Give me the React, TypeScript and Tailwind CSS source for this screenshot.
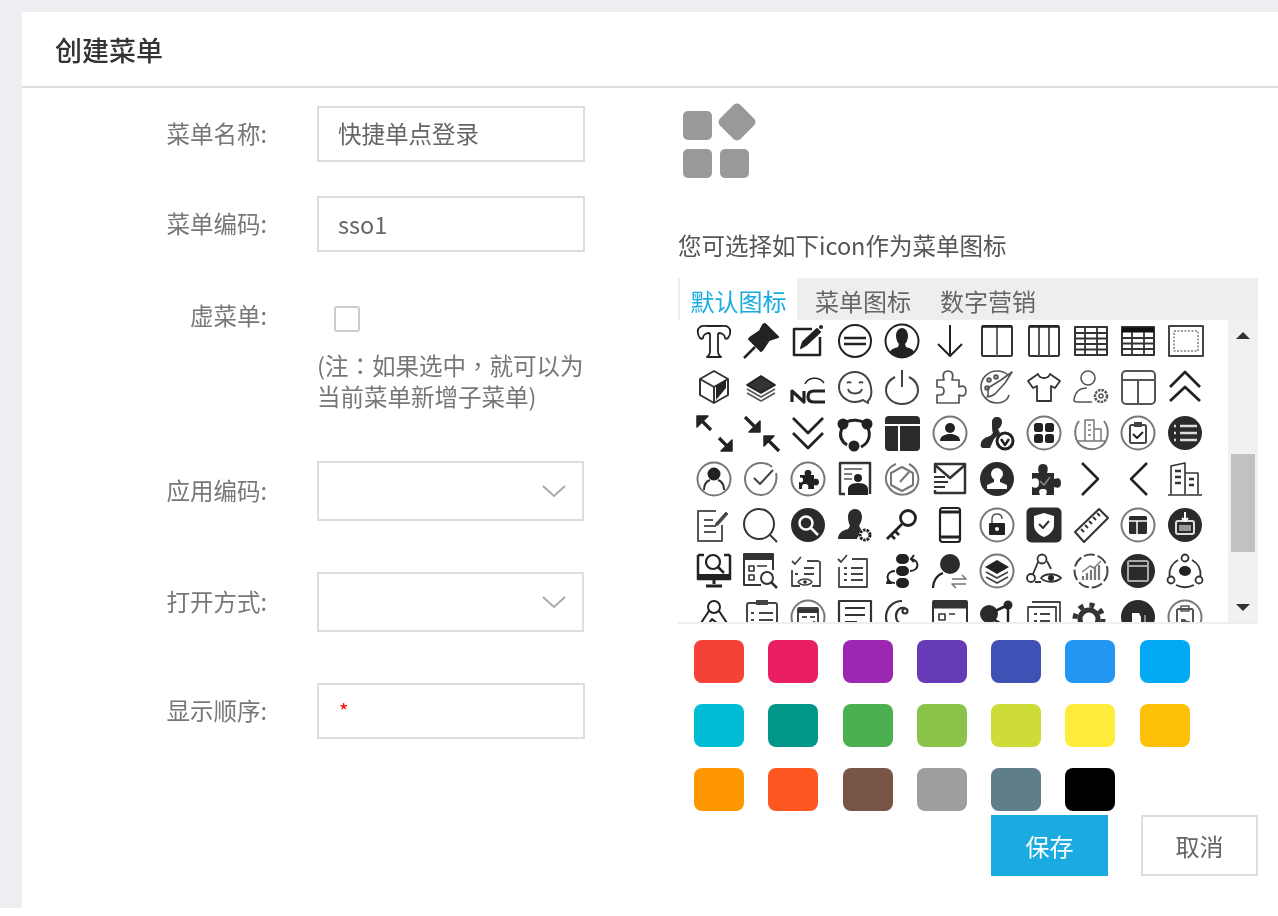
import { ReactNode } from 'react'

const FONT = { fontFamily: '"Noto Sans CJK SC", "Liberation Sans", sans-serif' }

const colors = [
  '#F44336', '#E91E63', '#9C27B0', '#673AB7', '#3F51B5', '#2196F3', '#03A9F4',
  '#00BCD4', '#009688', '#4CAF50', '#8BC34A', '#CDDC39', '#FFEB3B', '#FFC107',
  '#FF9800', '#FF5722', '#795548', '#9E9E9E', '#607D8B', '#000000',
]

// shared bits of the icon set, all in a 36x36 box
const ring = <circle cx="18" cy="18" r="16.5" stroke="#777" />
const disc = <circle cx="18" cy="18" r="17" fill="#2b2b2b" stroke="none" />

const icons: ReactNode[] = [
  // row 1
  <path d="M4 15C1 11 1 6 4 4c2-2 5-1 8-1h12c3 0 6-1 8 1 3 2 3 7 0 11-1 1-3 1-3 0 0-3-3-5-6-5l-1 1v18c0 3 2 4 3 5H11c1-1 3-2 3-5V11l-1-1c-3 0-6 2-6 5 0 1-2 1-3 0z" strokeWidth="1.8" />,
  <g><path d="M22 1l13 13-3 1-6 2-6 9-2 2-12-12 2-2 9-6 3-6z" fill="#222" /><path d="M12 24L1 35" strokeWidth="2.5" /></g>,
  <g><path d="M30 14v18H4V6h18" strokeWidth="2.5" /><path d="M11 25l2-6L27 6l3 3-14 13z" fill="#222" /><circle cx="31" cy="4" r="2" fill="#222" stroke="none" /></g>,
  <g><circle cx="18" cy="18" r="16" /><path d="M7 15h22M7 21h22" strokeWidth="2.5" /></g>,
  <g><circle cx="18" cy="18" r="16.5" /><path d="M12 13c0-5 3-8 6-8s6 3 6 8c0 4-2 7-3 8l1 3c3 1 7 2 8 5-3 4-7 6-12 6s-9-2-12-6c1-3 5-4 8-5l1-3c-1-1-3-4-3-8z" fill="#222" stroke="none" /></g>,
  <path d="M18 2v31M6 21l12 12 12-12" />,
  <g><rect x="3" y="3" width="30" height="30" rx="1.5" stroke="#333" /><path d="M18 3v30" stroke="#666" /><path d="M3 3.5h30" strokeWidth="2.5" /></g>,
  <g><rect x="3" y="3" width="30" height="30" rx="1.5" stroke="#333" /><path d="M13 3v30M23 3v30" stroke="#555" /><path d="M3 3.5h30" strokeWidth="2.5" /></g>,
  <g stroke="#333"><rect x="2" y="4" width="32" height="28" strokeWidth="2" /><path d="M2 10h32M2 15.5h32M2 21h32M2 26.5h32M12 4v28M24 4v28" strokeWidth="1.8" /></g>,
  <g stroke="#333"><rect x="2" y="4" width="32" height="28" strokeWidth="2" /><path d="M2 7h32" strokeWidth="5" stroke="#111" /><path d="M2 15h32M2 20.5h32M2 26h32M12 9v23M24 9v23" strokeWidth="1.8" /></g>,
  <g stroke="#444"><rect x="2" y="3" width="34" height="30" strokeWidth="2" /><rect x="7" y="8" width="24" height="20" strokeWidth="1" strokeDasharray="2 1.5" /></g>,
  // row 2
  <g stroke="#333"><path d="M18 2l14 8v16l-14 8-14-8V10z" /><path d="M4 10l14 8 14-8M18 18v16" /><path d="M20 17l10-6v8l-10 12z" fill="#222" stroke="none" /></g>,
  <g strokeWidth="1.6"><path d="M18 7l14 9-14 8-14-8z" fill="#333" /><path d="M4 20l14 8 14-8M4 24l14 8 14-8" stroke="#555" /></g>,
  <g strokeWidth="3.2"><path d="M2 33V22l12 11V22" /><path d="M35 22H24c-4 0-6 2-6 5.500s2 5.500 6 5.500h11" /><path d="M15 15c3-7 14-8 19-1" strokeWidth="1.5" /></g>,
  <g stroke="#444"><path d="M31 32c3-3 4-8 3-13C33 9 26 3 18 3 9 3 2 10 2 18s7 15 16 15c3 0 6-1 8-2l5 3z" /><path d="M10 14c1-1 3-1 4 0M22 14c1-1 3-1 4 0M11 20c2 6 12 6 14 0" /></g>,
  <g stroke="#444"><path d="M11 8C5 11 2 16 2 21c0 8 7 14 16 14s16-6 16-14c0-5-3-10-9-13" /><path d="M18 1v17" /></g>,
  <path d="M5 11h7c-2-6 0-9 4-9s6 3 4 9h7v7c5-2 7 0 7 4s-2 6-7 4v8H5v-8h3c3 0 4-2 4-4s-1-4-4-4H5z" stroke="#555" strokeWidth="1.7" />,
  <g stroke="#555"><path d="M30 26c-1 5-6 8-12 8C9 34 2 27 2 18S9 2 18 2c4 0 8 1 11 4" strokeWidth="1.6" /><path d="M9 19l13-8 11-8-7 11-10 11c-3 2-5 3-8 3 2-2 1-6 1-9z" strokeWidth="1.6" /><circle cx="10" cy="11" r="1.8" /><circle cx="17" cy="8" r="1.8" /><circle cx="8" cy="19" r="1.8" /></g>,
  <path d="M12 5l-10 7 5 7 4-2v15h14V17l4 2 5-7-10-7c-1 3-3 4-6 4s-5-1-6-4z" stroke="#333" strokeWidth="1.8" />,
  <g stroke="#555"><circle cx="15" cy="9" r="7" strokeWidth="1.6" /><path d="M14 19c-7 0-12 4-13 12 0 2 2 2 3 2h15" strokeWidth="1.6" /><circle cx="28" cy="27" r="6" strokeWidth="2.5" strokeDasharray="2.5 1" /><circle cx="28" cy="27" r="2" strokeWidth="1.5" /></g>,
  <g stroke="#555"><rect x="2" y="2" width="33" height="33" rx="4" /><path d="M2 11h33M18 11v24" /></g>,
  <path d="M3 18L18 3l15 15M3 32l15-14 15 14" strokeWidth="2.8" />,
  // row 3
  <g strokeWidth="3.2"><path d="M4 4l11 11M23 23l11 11" /><path d="M1 12V1h11zM36 25v11H25z" fill="#222" strokeWidth="1.5" /></g>,
  <g strokeWidth="3.2"><path d="M2 2l11 11M25 25l11 11" /><path d="M17 6v11H6zM21 31V21h10z" fill="#222" strokeWidth="1.5" /></g>,
  <path d="M3 3l15 15L33 3M3 18l15 15 15-15" strokeWidth="2.8" />,
  <g strokeWidth="3"><path d="M9 7c6-3 14-2 19 1M5 13c-3 7-1 13 5 17M31 13c3 7 1 15-7 19" /><circle cx="6" cy="9" r="4" fill="#222" /><circle cx="30" cy="9" r="4" fill="#222" /><circle cx="17" cy="31" r="4" fill="#222" /></g>,
  <g><rect x="1" y="1" width="35" height="35" rx="4" fill="#2b2b2b" stroke="none" /><path d="M1 10h35M15 10v26" stroke="#fff" strokeWidth="2" /></g>,
  <g>{ring}<circle cx="18" cy="13" r="5" fill="#222" stroke="none" /><path d="M8 26c0-5 5-7 10-7s10 2 10 7z" fill="#222" stroke="none" /></g>,
  <g><path d="M13 7c0-3 2-5 5-5s5 2 5 5-2 6-4 7l2 4-6 6-4 9H5c-3 0-4-2-3-5 1-4 5-6 9-7l3-3c-1-2-1-7-1-11z" fill="#2b2b2b" stroke="none" /><circle cx="26" cy="26" r="8" fill="#fff" strokeWidth="3" /><path d="M22 24l4 6 4-6" strokeWidth="2.5" /></g>,
  <g>{ring}<rect x="8" y="8" width="9" height="9" rx="2.5" fill="#222" stroke="none" /><rect x="19" y="8" width="9" height="9" rx="2.5" fill="#222" stroke="none" /><rect x="8" y="19" width="9" height="9" rx="2.5" fill="#222" stroke="none" /><rect x="19" y="19" width="9" height="9" rx="2.5" fill="#222" stroke="none" /></g>,
  <g stroke="#777" strokeWidth="1.5"><path d="M6 6C0 14 1 27 10 32c6 3 12 3 17 0 9-5 10-18 4-26" strokeWidth="2" /><path d="M12 26V5h9v21M21 14h7v12M5 26h27" /><path d="M15 10h3M15 15h3M15 20h3" /></g>,
  <g>{ring}<rect x="10" y="10" width="16" height="18" rx="1.5" stroke="#444" /><rect x="14" y="7" width="8" height="5" fill="#444" stroke="none" /><path d="M13 19l4 4 6-6" stroke="#222" /></g>,
  <g>{disc}<path d="M7 11h2M13 11h17M7 18h2M13 18h17M7 25h2M13 25h17" stroke="#ddd" strokeWidth="2.5" /></g>,
  // row 4
  <g>{ring}<circle cx="18" cy="13" r="5.5" fill="#222" stroke="#222" /><path d="M8 29c0-6 3-9 6-10M28 29c0-6-3-9-6-10" stroke="#333" /></g>,
  <g><path d="M33 12c2 9-3 22-15 22C9 34 2 27 2 18S9 2 18 2c4 0 8 1 11 4" stroke="#777" /><path d="M11 17l6 6L30 9" stroke="#444" /></g>,
  <g>{ring}<path d="M10 14h5c-1-3 0-5 3-5s4 2 3 5h3v4c3-1 5 0 5 3s-2 4-5 3v4h-6c1-3 0-5-3-5s-3 2-3 5H9v-7c3 1 4 0 4-2s-1-3-3-2z" fill="#222" stroke="none" /></g>,
  <g><path d="M8 33H3V2h30v31" strokeWidth="2.5" stroke="#333" /><path d="M7 8h18M7 13h8M7 18h8" strokeWidth="1.5" stroke="#555" /><circle cx="21" cy="17" r="4" fill="#222" stroke="none" /><path d="M11 34v-6c0-3 3-6 10-6s10 3 10 6v6z" fill="#222" stroke="none" /></g>,
  <g stroke="#777"><path d="M12 3C1 7-1 20 6 28c7 8 19 7 25 0 6-8 4-20-6-25" /><path d="M18 6l11 6v12l-11 6-11-6V12z" /><path d="M16 21l9-10" /></g>,
  <g strokeWidth="2.5" stroke="#333"><path d="M3 12V3h30v29H3v-3" /><path d="M3 4l15 13L33 4" /><path d="M2 16h11M2 21h14M2 26h11" strokeWidth="2" /></g>,
  <g>{disc}<circle cx="18" cy="13" r="6" fill="#fff" stroke="none" /><path d="M15 18h6v3l7 3v4H8v-4l7-3z" fill="#fff" stroke="none" /></g>,
  <g><path d="M6 12h7c-2-6 0-9 4-9s6 3 4 9h7v6c5-2 7 0 7 4s-2 6-7 4v8h-8c2-5 0-6-3-6s-5 1-3 6H6v-8c5 2 7 0 7-4s-2-6-7-4z" fill="#2b2b2b" stroke="none" /><path d="M14 20l4 4 6-8" stroke="#888" strokeWidth="1.5" /></g>,
  <path d="M9 2l16 16L9 34" strokeWidth="2.5" />,
  <path d="M27 2L11 18l16 16" strokeWidth="2.5" />,
  <g strokeWidth="1.6" stroke="#333"><path d="M4 33V5l14-3v31M18 12h13v21M1 34h34" /><path d="M8 10h6M8 16h6M8 22h6M22 18h5M22 24h5" strokeWidth="2.5" /></g>,
  // row 5
  <g stroke="#555"><path d="M26 18v16H2V4h18" strokeWidth="2" /><path d="M8 13h9M8 19h12M8 25h12" strokeWidth="2" /><path d="M20 16l-1 3 3-1L32 7l-2-2z" fill="#444" strokeWidth="1" /></g>,
  <g stroke="#333"><circle cx="16" cy="17" r="15" /><path d="M27 28l7 7" /></g>,
  <g>{disc}<circle cx="16" cy="16" r="6.5" stroke="#fff" strokeWidth="2.5" /><path d="M21 21l7 7" stroke="#fff" strokeWidth="2.5" /></g>,
  <g><path d="M11 10c0-5 3-8 7-8s7 3 7 8c0 4-2 7-3 9l2 3-4 10H1c0-6 5-9 10-10l2-3c-1-2-2-6-2-9z" fill="#2b2b2b" stroke="none" /><circle cx="28" cy="28" r="5" strokeWidth="3" strokeDasharray="2.5 1" fill="#fff" /></g>,
  <g strokeWidth="2.8"><circle cx="24" cy="11" r="7.5" /><path d="M18 17L3 32M7 28l4 4M11 24l4 4" /></g>,
  <g><rect x="8" y="1" width="20" height="34" rx="2.5" strokeWidth="2.2" /><path d="M8 5h20M8 30h20" strokeWidth="3" /></g>,
  <g>{ring}<path d="M13 16v-4c0-3 2-5 5-5s5 2 5 5" stroke="#555" strokeWidth="1.5" /><rect x="10" y="16" width="16" height="12" rx="1" fill="#222" stroke="none" /><circle cx="18" cy="22" r="2" fill="#fff" stroke="none" /></g>,
  <g><rect x="0.5" y="0.5" width="35" height="35" rx="5" fill="#2b2b2b" stroke="none" /><path d="M18 6l10 3v9c0 6-5 10-10 12-5-2-10-6-10-12V9z" fill="#fff" stroke="none" /><path d="M13 17l4 4 6-7" stroke="#333" strokeWidth="2" /></g>,
  <g strokeWidth="2" stroke="#333"><path d="M2 25L26 2l9 9-24 24z" /><path d="M8 22l3 3M12 18l3 3M16 14l3 3M20 10l3 3M24 6l3 3" strokeWidth="1.8" /></g>,
  <g>{ring}<rect x="9" y="9" width="18" height="18" rx="1.5" fill="#2b2b2b" stroke="none" /><path d="M9 14h18M17 14v13" stroke="#fff" strokeWidth="1.5" /></g>,
  <g>{disc}<rect x="9" y="14" width="18" height="13" rx="2" stroke="#ddd" /><rect x="12" y="18" width="12" height="6" fill="#999" stroke="none" /><path d="M18 5v9M15 11l3 3 3-3" stroke="#fff" /></g>,
  // row 6
  <g><path d="M2 2v24h32V2" strokeWidth="2.5" /><path d="M2 2h6M34 2h-6" strokeWidth="2.5" /><path d="M2 23h32" strokeWidth="4" /><circle cx="17" cy="9" r="7" strokeWidth="2.2" /><path d="M22 14l6 6" strokeWidth="2.5" /><path d="M18 26v5M10 33h16" strokeWidth="3" /></g>,
  <g strokeWidth="2" stroke="#333"><path d="M18 32H1V1h29v16" /><path d="M1 4h29" strokeWidth="6" /><path d="M6 13h5v5H6zM6 22h5v5H6zM14 13h10" strokeWidth="1.6" /><circle cx="24" cy="25" r="6" /><path d="M28 29l6 6" strokeWidth="2.5" /></g>,
  <g stroke="#444"><path d="M2 8l3 3 6-7M17 8h11l2 1v24H22M10 33H2V17" strokeWidth="1.8" /><path d="M14 15h10M14 21h10M5 21h3" strokeWidth="2.2" /><path d="M8 29c3-4 11-4 14 0-3 4-11 4-14 0z" strokeWidth="1.5" /><circle cx="15" cy="29" r="1.8" fill="#222" stroke="none" /></g>,
  <g stroke="#444"><path d="M1 6l3 3 6-7M15 6h15v28H2V14" strokeWidth="1.8" /><path d="M14 15h12M14 21h12M14 27h12M7 15h3M7 21h3M7 27h3" strokeWidth="2.2" /></g>,
  <g strokeWidth="2"><rect x="13" y="2" width="11" height="8" rx="4" fill="#222" /><rect x="13" y="26" width="11" height="8" rx="4" fill="#222" /><rect x="13" y="14" width="11" height="8" rx="4" fill="#222" /><path d="M26 6c10 0 10 12 0 12M11 18C1 18 1 30 11 30M5 26l-2 4h5M30 2l-3 4 3 3" /></g>,
  <g><circle cx="18" cy="11" r="10" fill="#2b2b2b" stroke="none" /><path d="M1 35c0-7 4-13 10-15" strokeWidth="2.2" /><path d="M20 26h14l-4-4M34 31H20l4 4" stroke="#777" strokeWidth="1.6" /></g>,
  <g>{ring}<path d="M18 7l12 7-12 7-12-7z" fill="#222" stroke="none" /><path d="M7 19l11 6 11-6M7 24l11 6 11-6" stroke="#444" strokeWidth="1.8" /></g>,
  <g strokeWidth="1.8" stroke="#333"><circle cx="16" cy="6" r="4.5" /><circle cx="5" cy="25" r="4" /><path d="M12 9L7 21M21 8l4 8M9 29h6" /><path d="M15 25c4-5 15-5 20 0-5 5-16 5-20 0z" /><circle cx="25" cy="25" r="3" fill="#222" stroke="none" /></g>,
  <g><circle cx="18" cy="18" r="16.5" stroke="#444" strokeWidth="2" strokeDasharray="11 3" /><path d="M10 27v-4M14 27v-7M18 27v-10M22 27V14M26 27V12" stroke="#777" strokeWidth="2.2" /><path d="M9 19l8-6 4 2 7-7" stroke="#777" strokeWidth="1.4" /></g>,
  <g>{disc}<rect x="8" y="8" width="20" height="20" rx="1.5" stroke="#aaa" /><path d="M8 13h20" stroke="#aaa" strokeWidth="2" /></g>,
  <g strokeWidth="1.8" stroke="#333"><path d="M11 7C4 11 2 17 2.500 23M25 7c7 4 9 10 8.500 16M9 32c6 3 12 3 18 0" /><circle cx="18" cy="5" r="3.500" /><circle cx="4" cy="27" r="3.500" /><circle cx="32" cy="27" r="3.500" /><ellipse cx="18" cy="18" rx="6" ry="5" fill="#222" stroke="none" /></g>,
  // row 7, cut off by the bottom of the list
  <g strokeWidth="2"><circle cx="18" cy="8" r="6" /><path d="M13 12L1 30h34L23 12M9 30l7-10 6 5M26 30a5 5 0 0 0-9 0" /></g>,
  <g stroke="#444"><rect x="4" y="4" width="30" height="32" rx="2" strokeWidth="2" /><rect x="13" y="1" width="12" height="5" fill="#444" stroke="none" /><path d="M16 14h14M16 21h14M16 28h14M8 14h3M8 21h3M8 28h3" strokeWidth="2" /></g>,
  <g>{ring}<rect x="8" y="9" width="20" height="20" rx="1" fill="#fff" stroke="#444" /><path d="M8 12h20" stroke="#333" strokeWidth="4" /><path d="M12 18h5M12 24h5M20 18h5" stroke="#555" strokeWidth="2" /><path d="M20 27l4-4 4 4" stroke="#333" strokeWidth="2" /></g>,
  <g strokeWidth="2.2" stroke="#333"><path d="M2 32V2h32v30" /><path d="M8 9h20M8 16h20M8 23h12" /><path d="M20 34c0-6 12-6 12 0" strokeWidth="3" /></g>,
  <g strokeWidth="2.2" stroke="#333"><path d="M32 24c-3 7-8 10-14 10C9 34 2 27 2 18S9 2 18 2" /><path d="M22 10c-5-3-10 1-10 7s5 10 10 7" /><circle cx="21" cy="12" r="2.500" /><path d="M26 32h2M31 32h2" /></g>,
  <g strokeWidth="2" stroke="#333"><rect x="1" y="2" width="34" height="34" rx="1" /><path d="M1 6h34" strokeWidth="7" /><path d="M7 15h6v6H7zM7 26h6v6H7zM17 15h6" strokeWidth="1.6" /><path d="M17 33l6-8 6 8" strokeWidth="3" /></g>,
  <g><circle cx="10" cy="15" r="9" fill="#2b2b2b" stroke="none" /><circle cx="29" cy="6" r="4.500" fill="#2b2b2b" stroke="none" /><circle cx="29" cy="29" r="4.500" fill="#2b2b2b" stroke="none" /><path d="M14 13L29 6v23L14 20" strokeWidth="2.5" /></g>,
  <g strokeWidth="1.8" stroke="#444"><path d="M6 3h28v24" /><path d="M2 8h28v28H2z" /><path d="M8 15h3M14 15h10M8 22h3M14 22h10M8 29h16" strokeWidth="2.2" /></g>,
  <g stroke="#333"><circle cx="16" cy="20" r="9" strokeWidth="5" /><circle cx="16" cy="20" r="14" strokeWidth="5" strokeDasharray="5 6" /><circle cx="29" cy="32" r="4" fill="#444" stroke="none" /></g>,
  <g>{disc}<path d="M12 14h7l2 4v18h-9z" fill="#fff" stroke="none" /><path d="M25 16v14" stroke="#888" strokeWidth="2" /></g>,
  <g>{ring}<rect x="10" y="10" width="16" height="20" rx="1.5" stroke="#555" /><rect x="14" y="7" width="8" height="5" stroke="#555" strokeWidth="1.5" /><path d="M14 20h4l2 2h3v6H14z" fill="#555" stroke="none" /></g>,
]

function Chevron() {
  return (
    <svg width="26" height="14" viewBox="0 0 26 14" fill="none" stroke="#aaa" strokeWidth="2" className="mr-[15px]">
      <path d="M2 2l11 10L24 2" />
    </svg>
  )
}

function Row({ label, className, children }: { label: string; className: string; children: ReactNode }) {
  return (
    <div className={`flex items-center ${className}`}>
      <label className="w-[245px] text-right text-[23.5px] text-[#777]">{label}</label>
      <div className="ml-[50px]">{children}</div>
    </div>
  )
}

export default function App() {
  return (
    <div className="h-[916px] bg-white overflow-hidden blur-[0.5px]" style={FONT}>
      <div className="h-[908px] bg-[#eceef1] pl-[22px] pt-[12px]">
        <div className="h-[896px] bg-white">
          {/* Header */}
          <div className="h-[76px] border-b-2 border-[#dedede] pl-[33px] flex items-center">
            <h1 className="text-[27px] font-medium text-[#333] mt-[2px]">创建菜单</h1>
          </div>

          <div className="flex">
            {/* Form */}
            <div className="w-[656px] shrink-0 pt-[18px]">
              <Row label="菜单名称:" className="">
                <input
                  readOnly
                  value="快捷单点登录"
                  className="w-[268px] h-[56px] border-2 border-[#ddd] pl-[19px] pr-[20px] pb-[3px] text-[23.5px] text-[#666] outline-none"
                />
              </Row>
              <Row label="菜单编码:" className="mt-[34px]">
                <input
                  readOnly
                  value="sso1"
                  className="w-[268px] h-[56px] border-2 border-[#ddd] pl-[19px] pr-[20px] text-[23.5px] text-[#666] outline-none"
                />
              </Row>
              <div className="flex mt-[54px]">
                <label className="w-[245px] text-right text-[23.5px] leading-[34px] text-[#777] -mt-[8px]">虚菜单:</label>
                <div className="ml-[50px] w-[270px]">
                  <div className="ml-[17px] w-[26px] h-[26px] border-2 border-[#ccc] rounded-[3px] bg-white" />
                  {/* full-width punctuation sits centred in the TC cut, as in the picture */}
                  <p className="mt-[18px] text-[23.5px] leading-[31px] text-[#777] whitespace-nowrap">
                    (注<span className="font-['Noto_Sans_CJK_TC']">{'\uFF1A'}</span>如果选中<span className="font-['Noto_Sans_CJK_TC']">{'\uFF0C'}</span>就可以为
                    <br />
                    当前菜单新增子菜单)
                  </p>
                </div>
              </div>
              <Row label="应用编码:" className="mt-[49px]">
                <div className="w-[267px] h-[60px] border-2 border-[#ddd] flex items-center justify-end">
                  <Chevron />
                </div>
              </Row>
              <Row label="打开方式:" className="mt-[51px]">
                <div className="w-[267px] h-[60px] border-2 border-[#ddd] flex items-center justify-end">
                  <Chevron />
                </div>
              </Row>
              <Row label="显示顺序:" className="mt-[51px]">
                <div className="w-[268px] h-[56px] border-2 border-[#ddd] px-[20px] flex items-center text-[20px] text-[#f00]">*</div>
              </Row>
            </div>

            {/* Icon picker */}
            <div className="w-[580px] shrink-0">
              <svg width="76" height="78" viewBox="0 0 76 78" fill="#999" className="ml-[4px] mt-[14px]">
                <rect x="1" y="9" width="29" height="29" rx="5" />
                <rect x="1" y="47" width="29" height="29" rx="5" />
                <rect x="38" y="47" width="29" height="29" rx="5" />
                <rect x="40.500" y="5.500" width="29" height="29" rx="5" transform="rotate(45 55 20)" />
              </svg>
              <p className="mt-[49px] text-[23.5px] leading-[32px] text-[#555] whitespace-nowrap">您可选择如下icon作为菜单图标</p>

              <div className="mt-[17px] h-[346px] bg-[#eee] overflow-hidden">
                <div className="h-[42px] flex pl-[2px] text-[24px] leading-[46px] text-[#666]">
                  <span className="w-[117px] text-center bg-white text-[#1aace0]">默认图标</span>
                  <span className="ml-[18px]">菜单图标</span>
                  <span className="ml-[29px]">数字营销</span>
                </div>
                <div className="flex h-[302px]">
                  <div className="w-[550px] bg-white overflow-hidden">
                    <div className="grid grid-cols-[repeat(11,47.2px)] auto-rows-[46px] pl-[12px] -mt-[2px]">
                      {icons.map((icon, i) => (
                        <div key={i} className="flex items-center justify-center">
                          <svg width="36" height="36" viewBox="0 0 36 36" fill="none" stroke="#222" strokeWidth="2" strokeLinejoin="round" overflow="visible">
                            {icon}
                          </svg>
                        </div>
                      ))}
                    </div>
                  </div>
                  {/* Scrollbar */}
                  <div className="flex-1 bg-[#f1f1f1] flex flex-col items-center">
                    <div className="mt-[12px] w-0 h-0 border-x-[7px] border-x-transparent border-b-[7px] border-b-[#333]" />
                    <div className="mt-[115px] w-[24px] h-[98px] bg-[#c1c1c1]" />
                    <div className="mt-[52px] w-0 h-0 border-x-[7px] border-x-transparent border-t-[7px] border-t-[#333]" />
                  </div>
                </div>
              </div>

              <div className="mt-[16px] ml-[16px] flex flex-wrap w-[520px] gap-x-[24.3px] gap-y-[21px]">
                {colors.map((c) => (
                  <div key={c} className="w-[50px] h-[43px] rounded-[8px]" style={{ backgroundColor: c }} />
                ))}
              </div>

              <div className="mt-[4px] flex justify-end gap-[33px]">
                <button className="w-[117px] h-[61px] bg-[#1aace0] text-white text-[24px]">保存</button>
                <button className="w-[117px] h-[61px] bg-white border-2 border-[#ddd] text-[#666] text-[24px]">取消</button>
              </div>
            </div>
          </div>
        </div>
      </div>
    </div>
  )
}
